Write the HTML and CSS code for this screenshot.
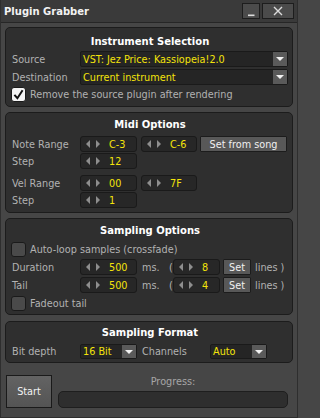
FILE: index.html
```html
<!DOCTYPE html>
<html>
<head>
<meta charset="utf-8">
<link rel="stylesheet" href="styles.css">
</head>
<body>
<div class="window">
  <div class="titlebar">
    <span class="ttl">Plugin Grabber</span>
    <div class="tbtns">
      <div class="tb min"><svg width="16" height="14" viewBox="0 0 16 14"><rect x="5" y="10.5" width="6.5" height="1.6" fill="#dcdcdc"/></svg></div>
      <div class="tb close"><svg width="30" height="14" viewBox="0 0 30 14"><path d="M11 3 L19 11 M19 3 L11 11" stroke="#dcdcdc" stroke-width="1.4" fill="none"/></svg></div>
    </div>
  </div>
  <div class="content">
    <section class="panel p1">
      <div class="ptitle">Instrument Selection</div>
      <div class="rows">
        <div class="row"><span class="lbl">Source</span><div class="dd grow"><span class="dv">VST: Jez Price: Kassiopeia!2.0</span><span class="db"></span></div></div>
        <div class="row"><span class="lbl">Destination</span><div class="dd grow"><span class="dv">Current instrument</span><span class="db"></span></div></div>
        <div class="row crow"><span class="cb on"><svg width="13" height="13" viewBox="0 0 13 13"><path d="M2.4 6.8 L5.4 10.2 L10.6 2.2" stroke="#111" stroke-width="2" fill="none"/></svg></span><span class="txt">Remove the source plugin after rendering</span></div>
      </div>
    </section>

    <section class="panel p2">
      <div class="ptitle">Midi Options</div>
      <div class="grp">
        <div class="row"><span class="lbl">Note Range</span>
          <div class="val w57"><span class="al"></span><span class="ar"></span><span class="v">C-3</span></div>
          <div class="val w56 ml4"><span class="al"></span><span class="ar"></span><span class="v">C-6</span></div>
          <button class="btn song">Set from song</button>
        </div>
        <div class="row"><span class="lbl">Step</span>
          <div class="val w57"><span class="al"></span><span class="ar"></span><span class="v">12</span></div>
        </div>
      </div>
      <div class="grp g2">
        <div class="row"><span class="lbl">Vel Range</span>
          <div class="val w57"><span class="al"></span><span class="ar"></span><span class="v">00</span></div>
          <div class="val w56 ml4"><span class="al"></span><span class="ar"></span><span class="v">7F</span></div>
        </div>
        <div class="row"><span class="lbl">Step</span>
          <div class="val w57"><span class="al"></span><span class="ar"></span><span class="v">1</span></div>
        </div>
      </div>
    </section>

    <section class="panel p3">
      <div class="ptitle">Sampling Options</div>
      <div class="rows">
        <div class="row crow"><span class="cb"></span><span class="txt">Auto-loop samples (crossfade)</span></div>
        <div class="row"><span class="lbl">Duration</span>
          <div class="val w57"><span class="al"></span><span class="ar"></span><span class="v">500</span></div>
          <span class="unit">ms.</span><span class="paren">(</span>
          <div class="val w47"><span class="al"></span><span class="ar"></span><span class="v">8</span></div>
          <button class="btn set">Set</button><span class="lines">lines )</span>
        </div>
        <div class="row"><span class="lbl">Tail</span>
          <div class="val w57"><span class="al"></span><span class="ar"></span><span class="v">500</span></div>
          <span class="unit">ms.</span><span class="paren">(</span>
          <div class="val w47"><span class="al"></span><span class="ar"></span><span class="v">4</span></div>
          <button class="btn set">Set</button><span class="lines">lines )</span>
        </div>
        <div class="row crow last"><span class="cb"></span><span class="txt">Fadeout tail</span></div>
      </div>
    </section>

    <section class="panel p4">
      <div class="ptitle">Sampling Format</div>
      <div class="row r15"><span class="lbl">Bit depth</span>
        <div class="dd w57"><span class="dv">16 Bit</span><span class="db"></span></div>
        <span class="lbl ch">Channels</span>
        <div class="dd w57"><span class="dv">Auto</span><span class="db"></span></div>
      </div>
    </section>

    <div class="bottom">
      <button class="start">Start</button>
      <div class="prog">
        <div class="plabel">Progress:</div>
        <div class="pbar"></div>
      </div>
    </div>
  </div>
</div>
</body>
</html>
```

FILE: styles.css
```css
html, body {
  margin: 0;
  padding: 0;
  background: #464646;
}
body {
  font-family: "DejaVu Sans", sans-serif;
  font-size: 9.7px;
  color: #b2b2b2;
}
.window {
  width: 298px;
  height: 418px;
  box-sizing: border-box;
  border: 1px solid #2e2e2e;
  border-top: none;
  background: #464646;
  display: flex;
  flex-direction: column;
}
.titlebar {
  height: 23px;
  flex: none;
  box-sizing: border-box;
  border-bottom: 1px solid #262626;
  background: #3a3a3a;
  display: flex;
  align-items: center;
  justify-content: space-between;
  padding: 0 3px;
}
.ttl {
  font-weight: bold;
  font-size: 10px;
  color: #f2f2f2;
  margin-top: 1px;
}
.tbtns {
  display: flex;
  gap: 2px;
  align-self: flex-start;
  margin-top: 3px;
}
.tb {
  height: 16px;
  box-sizing: border-box;
  border: 1px solid #1d1d1d;
  background: #4b4b4b;
  display: flex;
}
.tb.min { width: 18px; }
.tb.close { width: 32px; }

.content {
  flex: 1;
  padding: 4px 4px 0 4px;
  display: flex;
  flex-direction: column;
}
.panel {
  background: #2f2f2f;
  border: 1px solid #1c1c1c;
  border-radius: 5px;
  padding: 0 4px 0 6px;
}
.ptitle {
  text-align: center;
  font-weight: bold;
  font-size: 10px;
  line-height: 12px;
  height: 12px;
  color: #ffffff;
  white-space: nowrap;
}
.rows {
  display: flex;
  flex-direction: column;
  gap: 2px;
}
.row {
  display: flex;
  align-items: center;
  height: 16px;
  white-space: nowrap;
}
.crow { height: 15px; }
.lbl {
  width: 68px;
  flex: none;
  color: #b2b2b2;
}
.txt { color: #b2b2b2; }

/* panel 1 */
.p1 { padding-top: 8px; padding-bottom: 4px; }
.p1 .ptitle { margin-bottom: 3px; }

/* panel 2 */
.p2 { margin-top: 5px; padding-top: 6px; padding-bottom: 4px; }
.p2 .ptitle { margin-bottom: 5px; }
.grp { display: flex; flex-direction: column; gap: 1px; }
.g2 { margin-top: 6px; }

/* panel 3 */
.p3 { margin-top: 5px; padding-top: 6px; padding-bottom: 3px; }
.p3 .ptitle { margin-bottom: 5px; }
.p3 .last { margin-top: 1px; }

/* panel 4 */
.p4 { margin-top: 6px; padding-top: 5px; padding-bottom: 3px; }
.p4 .ptitle { margin-bottom: 5px; }
.r15 { height: 15px; }
.r15 .dd { height: 15px; }
.r15 .db { height: 13px; }
.ch { margin-left: 5px; }

/* dropdown */
.dd {
  display: flex;
  align-items: center;
  height: 16px;
  box-sizing: border-box;
  border: 1px solid #1a1a1a;
  border-radius: 2px;
  background: #252525;
}
.dd.grow { flex: 1; }
.dd.w57 { width: 57px; flex: none; }
.dv {
  flex: 1;
  padding-left: 2px;
  color: #f4e40a;
  overflow: hidden;
}
.db {
  width: 14px;
  height: 14px;
  background: #5a5a5a;
  display: flex;
  align-items: center;
  justify-content: center;
  flex: none;
}
.db::after {
  content: "";
  width: 0;
  height: 0;
  border-left: 4px solid transparent;
  border-right: 4px solid transparent;
  border-top: 4px solid #f2f2f2;
}

/* value boxes */
.val {
  display: flex;
  align-items: center;
  height: 16px;
  box-sizing: border-box;
  border: 1px solid #1a1a1a;
  border-radius: 3px;
  background: #272727;
  flex: none;
}
.w57 { width: 57px; }
.w56 { width: 56px; }
.w47 { width: 47px; }
.ml4 { margin-left: 4px; }
.al, .ar {
  width: 0;
  height: 0;
  border-top: 4px solid transparent;
  border-bottom: 4px solid transparent;
}
.al { margin-left: 5px; border-right: 4px solid #8e8e8e; }
.ar { margin-left: 6px; border-left: 4px solid #8e8e8e; }
.v { margin-left: 9px; color: #f4e40a; }

/* buttons */
.btn {
  height: 16px;
  box-sizing: border-box;
  border: 1px solid #1c1c1c;
  background: #585858;
  color: #f0f0f0;
  font-family: "DejaVu Sans", sans-serif;
  font-size: 9.7px;
  padding: 0;
  border-radius: 1px;
}
.song { width: 87px; margin-left: 3px; }
.set { width: 28px; margin-left: 3px; }
.unit { width: 27px; margin-left: 5px; flex: none; }
.paren { width: 4px; flex: none; }
.lines { margin-left: 4px; }

/* checkbox */
.cb {
  width: 15px;
  height: 15px;
  box-sizing: border-box;
  border: 1px solid #1a1a1a;
  border-radius: 3px;
  background: #4a4a4a;
  margin-left: -1px;
  margin-right: 4px;
  flex: none;
  display: flex;
}
.cb.on { background: #f4f4f4; }

/* bottom */
.bottom {
  display: flex;
  gap: 6px;
  margin-top: 12px;
  padding-left: 1px;
  padding-right: 5px;
}
.start {
  width: 46px;
  height: 33px;
  box-sizing: border-box;
  border: 1px solid #1a1a1a;
  background: linear-gradient(#636363, #545454);
  color: #f2f2f2;
  font-family: "DejaVu Sans", sans-serif;
  font-size: 9.7px;
  padding: 0;
  flex: none;
}
.prog {
  flex: 1;
  display: flex;
  flex-direction: column;
}
.plabel {
  text-align: center;
  line-height: 14px;
  height: 14px;
  color: #a6a6a6;
}
.pbar {
  margin-top: 2px;
  height: 17px;
  box-sizing: border-box;
  border: 1px solid #1e1e1e;
  border-radius: 5px;
  background: #2e2e2e;
}
```
